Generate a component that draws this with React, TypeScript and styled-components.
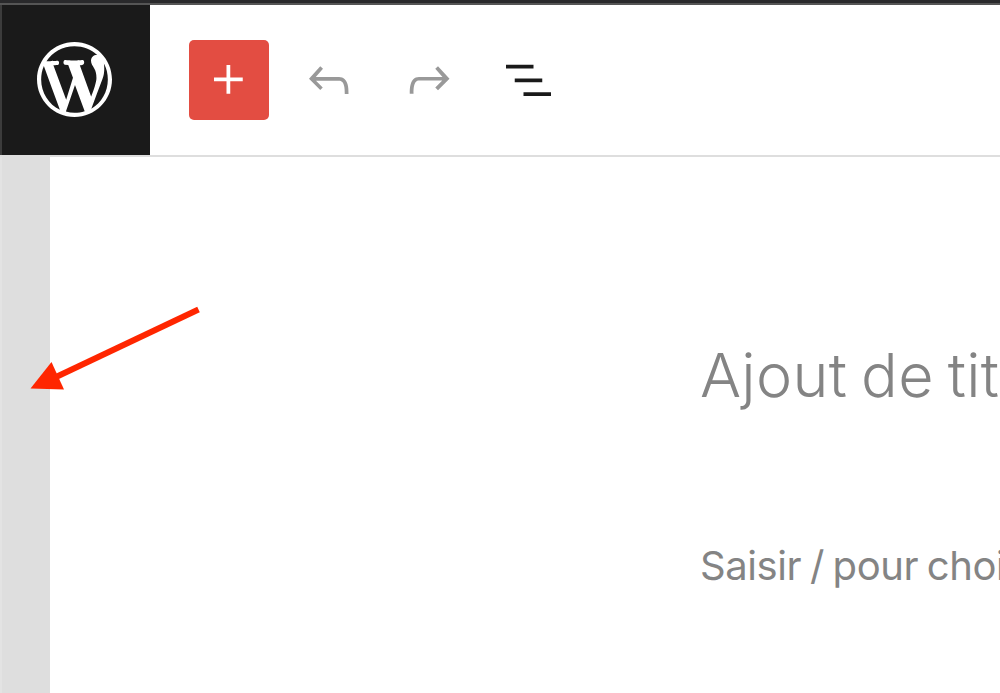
import type { ReactNode } from "react";
import styled, { createGlobalStyle } from "styled-components";

const colors = {
  dark: "#1a1a1a",
  accent: "#e34d42",
  muted: "#999999",
  text: "#848484",
  border: "#dedede",
  arrow: "#ff2600",
};

const Icon = ({ children }: { children: ReactNode }) => (
  <svg width="60" height="60" viewBox="0 0 24 24" fill="currentColor">
    {children}
  </svg>
);

export default function App() {
  return (
    <>
      <GlobalStyle />
      <Editor>
        <AdminBar />
        <Header>
          <HomeLink aria-label="WordPress">
            <svg width="75" height="75" viewBox="0 0 20 20" fill="currentColor">
              <path d="M20 10c0-5.51-4.49-10-10-10C4.48 0 0 4.49 0 10c0 5.52 4.48 10 10 10 5.51 0 10-4.48 10-10zM7.78 15.37L4.37 6.22c.55-.02 1.17-.08 1.17-.08.5-.06.44-1.13-.06-1.11 0 0-1.45.11-2.37.11-.18 0-.37 0-.58-.01C4.12 2.69 6.87 1.11 10 1.11c2.33 0 4.45.87 6.05 2.34-.68-.11-1.65.39-1.65 1.58 0 .74.45 1.36.9 2.1.35.61.55 1.36.55 2.46 0 1.49-1.4 5-1.4 5l-3.03-8.37c.54-.02.82-.17.82-.17.5-.05.44-1.25-.06-1.22 0 0-1.44.12-2.38.12-.87 0-2.33-.12-2.33-.12-.5-.03-.56 1.2-.06 1.22l.92.08 1.26 3.41zM17.41 10c.24-.64.74-1.87.43-4.25.7 1.29 1.05 2.71 1.05 4.25 0 3.29-1.73 6.24-4.4 7.78.97-2.59 1.94-5.2 2.92-7.78zM6.1 18.09C3.12 16.65 1.11 13.53 1.11 10c0-1.3.23-2.48.72-3.59C3.25 10.3 4.67 14.2 6.1 18.09zm4.03-6.63l2.58 6.98c-.86.29-1.76.45-2.71.45-.79 0-1.57-.11-2.29-.33.81-2.38 1.62-4.74 2.42-7.1z" />
            </svg>
          </HomeLink>
          <Toolbar>
            <ToolButton $primary>
              <Icon>
                <path d="M12.5 11V6h-1.5v5H6v1.5h5v5h1.5v-5h5V11z" />
              </Icon>
            </ToolButton>
            <ToolButton $color={colors.muted}>
              <Icon>
                <path d="M18.3 11.7c-.6-.6-1.4-.9-2.3-.9H6.7l2.9-3.3-1.1-1-4.5 5L8.5 16l1-1-2.7-2.7H16c.5 0 .9.2 1.3.5 1 1 1 3.4 1 4.5v.3h1.5v-.2c0-1.5 0-4.3-1.5-5.7z" />
              </Icon>
            </ToolButton>
            <ToolButton $color={colors.muted}>
              <Icon>
                <path d="M15.6 6.5l-1.1 1 2.9 3.3H8c-.9 0-1.7.3-2.3.9-1.4 1.5-1.4 4.2-1.4 5.6v.2h1.5v-.3c0-1.1 0-3.5 1-4.5.3-.3.7-.5 1.3-.5h9.2L14.5 15l1.1 1.1 4.6-4.6-4.6-5z" />
              </Icon>
            </ToolButton>
            <ToolButton>
              <Icon>
                <path d="M2.8 5.9h11v1.5h-11zM6.3 11.4h11v1.5h-11zM9.8 16.9h11v1.5h-11z" />
              </Icon>
            </ToolButton>
          </Toolbar>
        </Header>
        <Body>
          <Gutter />
          <Canvas>
            <Title>Ajout de titre</Title>
            <Paragraph>Saisir / pour choisir un bloc</Paragraph>
          </Canvas>
          <Pointer width="180" height="96" viewBox="0 0 180 96">
            <path d="M168.5 9.5 26 77" stroke={colors.arrow} strokeWidth="6" />
            <path d="M.5 88.5 21.5 62 34 89.5z" fill={colors.arrow} />
          </Pointer>
        </Body>
      </Editor>
    </>
  );
}

const GlobalStyle = createGlobalStyle`
  * {
    box-sizing: border-box;
  }
  body {
    margin: 0;
    overflow: hidden;
    background: #fff;
  }
`;

const Editor = styled.div`
  display: flex;
  flex-direction: column;
  height: 100vh;
  overflow: hidden;
  font-family: Inter, "Liberation Sans", sans-serif;
`;

const AdminBar = styled.div`
  flex: none;
  height: 5px;
  background: #29292b;
  border-bottom: 2px solid #555;
`;

const Header = styled.header`
  display: flex;
  flex: none;
  height: 152px;
  border-bottom: 2px solid ${colors.border};
`;

const HomeLink = styled.a`
  display: flex;
  align-items: center;
  justify-content: center;
  width: 150px;
  height: 150px;
  padding: 0 3px 1px 0;
  color: #fff;
  background: ${colors.dark};
  border-left: 2px solid #3c3c3c;
`;

const Toolbar = styled.div`
  display: flex;
  gap: 20px;
  padding: 35px 0 0 39px;
`;

const ToolButton = styled.button<{ $primary?: boolean; $color?: string }>`
  display: flex;
  align-items: center;
  justify-content: center;
  width: 80px;
  height: 80px;
  padding: 0;
  border: 0;
  border-radius: 5px;
  color: ${({ $primary, $color }) => ($primary ? "#fff" : $color || colors.dark)};
  background: ${({ $primary }) => ($primary ? colors.accent : "transparent")};
`;

const Body = styled.main`
  position: relative;
  display: flex;
  flex: 1;
`;

const Gutter = styled.div`
  width: 50px;
  background: ${colors.border};
  border-left: 2px solid #e3e3e3;
`;

const Canvas = styled.div`
  flex: 1;
  min-width: 0;
  overflow: hidden;
  padding: 178px 0 0 650px;
  color: ${colors.text};
  white-space: nowrap;
`;

const Title = styled.h1`
  margin: 0;
  font-size: 61px;
  font-weight: 300;
  line-height: 80px;
  letter-spacing: 0.3px;
  word-spacing: -3.5px;
`;

const Paragraph = styled.p`
  margin: 121px 0 0;
  font-size: 40px;
  font-weight: 400;
  line-height: 60px;
  letter-spacing: -0.4px;
  word-spacing: -2.2px;
`;

/* annotation over the page, pointing at the gutter */
const Pointer = styled.svg`
  position: absolute;
  top: 143px;
  left: 30px;
`;
